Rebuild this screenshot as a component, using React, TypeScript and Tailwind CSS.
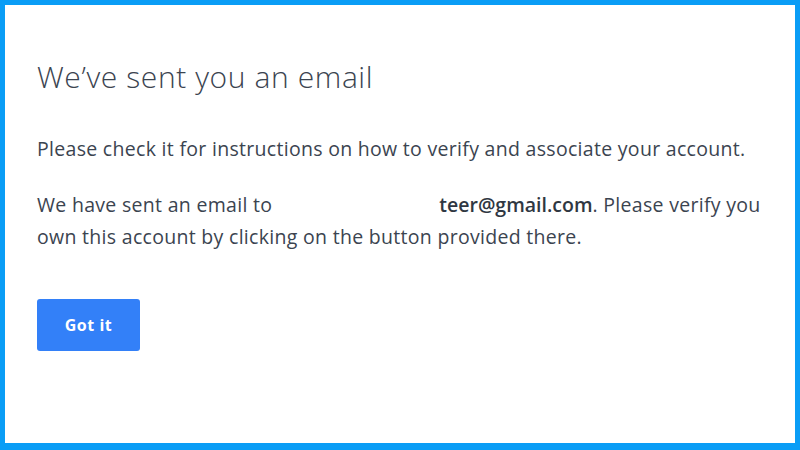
export default function App() {
  return (
    <div className="w-[800px] h-[450px] bg-[#0a9df6] pt-[5px] pl-[5px] pr-[5px] pb-[7px]">
      <div className="w-full h-full bg-white pl-[32px] pr-[26px] pt-[52px] text-[#3b4450]" style={{ fontFamily: '"Open Sans", Lato, sans-serif' }}>
        <h1 className="text-[30px] font-light leading-[40px] tracking-[0.6px]">We’ve sent you an email</h1>
        <p className="mt-[36px] text-[19.5px] leading-[32px] tracking-[0.3px]">Please check it for instructions on how to verify and associate your account.</p>
        <p className="mt-[24px] text-[19.5px] leading-[32px] tracking-[0.3px]">
          <span>We have sent an email to</span>
          <span className="ml-[167px] font-semibold tracking-[0px] text-[#2f3742]">teer@gmail.com</span>
          <span>. Please verify you</span>
          <br />
          <span>own this account by clicking on the button provided there.</span>
        </p>
        <button className="mt-[46px] w-[103px] h-[52px] rounded-[3px] bg-[#3380f8] text-white font-bold text-[16px] tracking-[0.5px]">Got it</button>
      </div>
    </div>
  );
}
